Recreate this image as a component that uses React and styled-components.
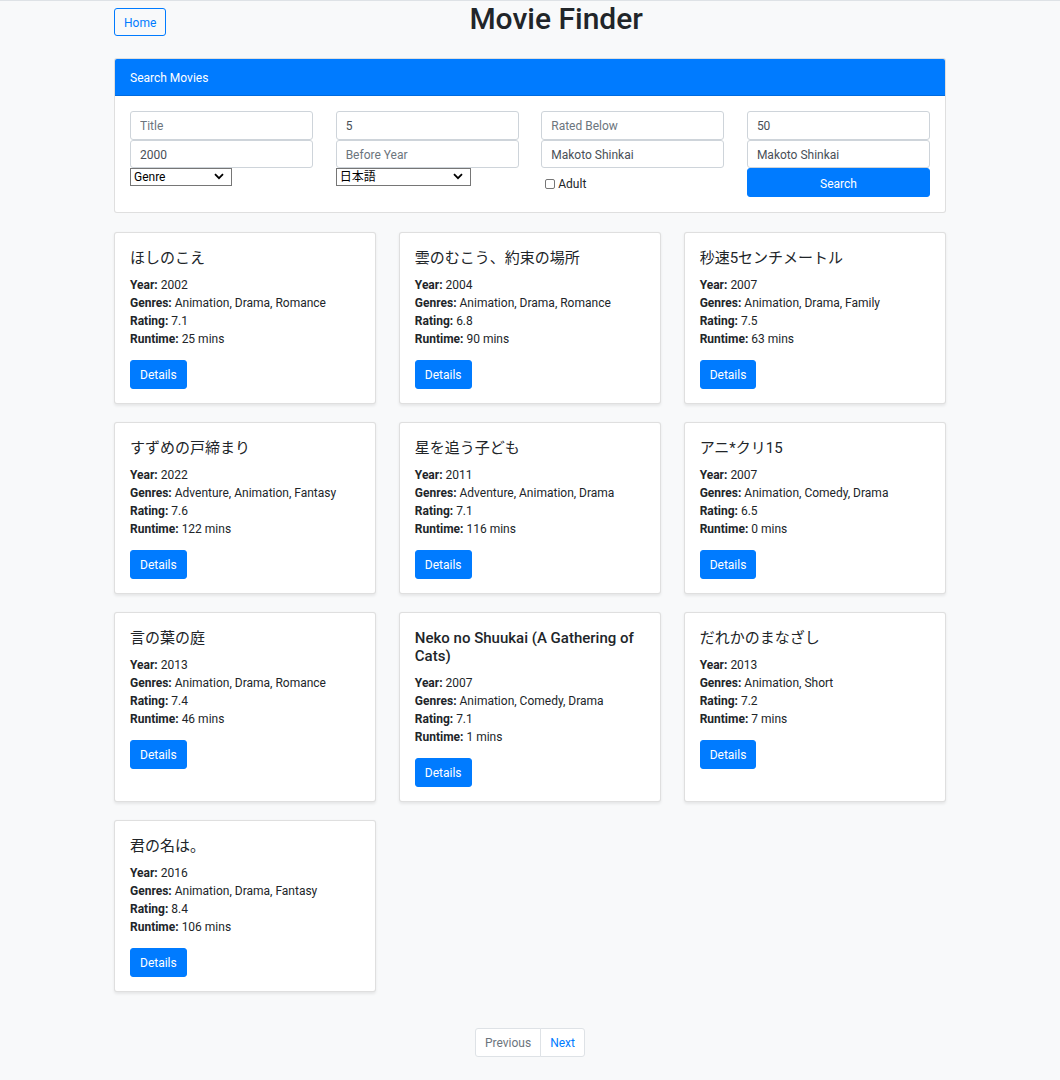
import React from "react";
import styled, { createGlobalStyle } from "styled-components";

const FONT = `Roboto, "Noto Sans CJK JP", sans-serif`;

const GlobalStyle = createGlobalStyle`
  * { box-sizing: border-box; }
  body {
    margin: 0;
    background: #f8f9fa;
    color: #212529;
    font-family: ${FONT};
    font-size: 12px;
    line-height: 1.5;
  }
`;

const Page = styled.div`
  border-top: 1px solid #dee2e6;
  min-height: 1079px;
`;

const Container = styled.div`
  width: 832px;
  margin: 0 auto;
  padding-bottom: 20px;
`;

const Header = styled.header`
  display: flex;
  align-items: center;
  margin-bottom: 15px;
`;

const OutlineButton = styled.button`
  font-family: ${FONT};
  font-size: 12px;
  line-height: 18px;
  padding: 5px 9px 3px;
  color: #007bff;
  background: transparent;
  border: 1px solid #007bff;
  border-radius: 3px;
  cursor: pointer;
`;

const Title = styled.h1`
  flex: 1;
  margin: 0 0 6px;
  text-align: center;
  font-size: 30px;
  line-height: 36px;
  font-weight: 500;
`;

const Card = styled.div`
  display: flex;
  flex-direction: column;
  background: #fff;
  border: 1px solid rgba(0, 0, 0, 0.125);
  border-radius: 3px;
  box-shadow: ${(p) => (p.$shadow ? "0 1.5px 3px rgba(0,0,0,0.075)" : "none")};
`;

const SearchCard = styled(Card)`
  margin-bottom: 18.5px;
`;

const CardHeader = styled.div`
  background: #007bff;
  color: #fff;
  padding: 10px 15px 8px;
  line-height: 18px;
  border-bottom: 1px solid rgba(0, 0, 0, 0.125);
  border-radius: 2px 2px 0 0;
`;

const CardBody = styled.div`
  padding: 15px;
`;

const FormGrid = styled.div`
  display: grid;
  grid-template-columns: repeat(4, 1fr);
  column-gap: 22.5px;
`;

const Column = styled.div`
  display: flex;
  flex-direction: column;
  align-items: flex-start;
`;

const Input = styled.input`
  display: block;
  width: 100%;
  height: 28.5px;
  padding: 5px 9px 3px;
  font-family: ${FONT};
  font-size: 12px;
  line-height: 18px;
  color: #495057;
  background: #fff;
  border: 1px solid #ced4da;
  border-radius: 3px;
  outline: none;
  &::placeholder { color: #6c757d; }
`;

const SelectWrap = styled.div`
  position: relative;
  width: ${(p) => p.$width}px;
`;

const Select = styled.select`
  appearance: none;
  display: block;
  width: 100%;
  height: 18px;
  padding: 0 18px 0 3px;
  font-family: ${FONT};
  font-size: 12px;
  line-height: 16px;
  color: #000;
  background: #fff;
  border: 1px solid #767676;
  border-radius: 0;
`;

const Chevron = styled.svg`
  position: absolute;
  right: 8px;
  top: 5px;
  pointer-events: none;
`;

const CheckRow = styled.label`
  display: flex;
  align-items: center;
  gap: 3px;
  margin: 7px 0 0 4px;
  line-height: 18px;
  color: #212529;
`;

const Checkbox = styled.input`
  appearance: none;
  width: 10px;
  height: 10px;
  margin: 0;
  border: 1px solid #767676;
  border-radius: 2px;
  background: #fff;
`;

const PrimaryButton = styled.button`
  font-family: ${FONT};
  font-size: 12px;
  line-height: 18px;
  padding: 5.5px 9px 3.5px;
  color: #fff;
  background: #007bff;
  border: 1px solid #007bff;
  border-radius: 3px;
  cursor: pointer;
  width: ${(p) => (p.$block ? "100%" : "auto")};
  align-self: flex-start;
`;

const MovieGrid = styled.div`
  display: grid;
  grid-template-columns: repeat(3, 1fr);
  column-gap: 22.5px;
  row-gap: 18px;
`;

const MovieBody = styled.div`
  padding: 16px 15px 14px;
  display: flex;
  flex-direction: column;
`;

const MovieTitle = styled.h5`
  margin: 0 0 9px;
  font-size: 15px;
  line-height: 18px;
  font-weight: ${(p) => (p.$jp ? 400 : 500)};
  color: #212529;
`;

const Info = styled.p`
  margin: 0 0 12px;
  line-height: 18px;
`;

const InfoLine = styled.span`
  display: block;
  strong { font-weight: 700; }
`;

const Pagination = styled.nav`
  display: flex;
  justify-content: center;
  margin-top: 36px;
`;

const PageList = styled.ul`
  display: flex;
  list-style: none;
  margin: 0;
  padding: 0;
`;

const PageLink = styled.a`
  display: block;
  padding: 7px 9px 5px;
  line-height: 15px;
  font-size: 12px;
  color: ${(p) => (p.$disabled ? "#6c757d" : "#007bff")};
  background: #fff;
  border: 1px solid #dee2e6;
  margin-left: ${(p) => (p.$first ? "0" : "-1px")};
  border-radius: ${(p) => (p.$first ? "3px 0 0 3px" : p.$last ? "0 3px 3px 0" : "0")};
  text-decoration: none;
`;

const movies = [
  { title: "ほしのこえ", jp: true, year: 2002, genres: "Animation, Drama, Romance", rating: "7.1", runtime: 25 },
  { title: "雲のむこう、約束の場所", jp: true, year: 2004, genres: "Animation, Drama, Romance", rating: "6.8", runtime: 90 },
  { title: "秒速5センチメートル", jp: true, year: 2007, genres: "Animation, Drama, Family", rating: "7.5", runtime: 63 },
  { title: "すずめの戸締まり", jp: true, year: 2022, genres: "Adventure, Animation, Fantasy", rating: "7.6", runtime: 122 },
  { title: "星を追う子ども", jp: true, year: 2011, genres: "Adventure, Animation, Drama", rating: "7.1", runtime: 116 },
  { title: "アニ*クリ15", jp: true, year: 2007, genres: "Animation, Comedy, Drama", rating: "6.5", runtime: 0 },
  { title: "言の葉の庭", jp: true, year: 2013, genres: "Animation, Drama, Romance", rating: "7.4", runtime: 46 },
  { title: "Neko no Shuukai (A Gathering of Cats)", jp: false, year: 2007, genres: "Animation, Comedy, Drama", rating: "7.1", runtime: 1 },
  { title: "だれかのまなざし", jp: true, year: 2013, genres: "Animation, Short", rating: "7.2", runtime: 7 },
  { title: "君の名は。", jp: true, year: 2016, genres: "Animation, Drama, Fantasy", rating: "8.4", runtime: 106 },
];

const ChevronIcon = () => (
  <Chevron width="10" height="7" viewBox="0 0 10 7">
    <path d="M1 1.2 L5 5.2 L9 1.2" fill="none" stroke="#000" strokeWidth="1.8" />
  </Chevron>
);

function MovieCard({ m }) {
  return (
    <Card $shadow>
      <MovieBody>
        <MovieTitle $jp={m.jp}>{m.title}</MovieTitle>
        <Info>
          <InfoLine><strong>Year:</strong> {m.year}</InfoLine>
          <InfoLine><strong>Genres:</strong> {m.genres}</InfoLine>
          <InfoLine><strong>Rating:</strong> {m.rating}</InfoLine>
          <InfoLine><strong>Runtime:</strong> {m.runtime} mins</InfoLine>
        </Info>
        <PrimaryButton>Details</PrimaryButton>
      </MovieBody>
    </Card>
  );
}

export default function App() {
  return (
    <Page>
      <GlobalStyle />
      <Container>
        <Header>
          <OutlineButton>Home</OutlineButton>
          <Title>Movie Finder</Title>
        </Header>

        <SearchCard>
          <CardHeader>Search Movies</CardHeader>
          <CardBody>
            <FormGrid>
              <Column>
                <Input placeholder="Title" />
                <Input defaultValue="2000" />
                <SelectWrap $width={102}>
                  <Select defaultValue="">
                    <option value="">Genre</option>
                  </Select>
                  <ChevronIcon />
                </SelectWrap>
              </Column>
              <Column>
                <Input defaultValue="5" />
                <Input placeholder="Before Year" />
                <SelectWrap $width={135}>
                  <Select defaultValue="ja">
                    <option value="ja">日本語</option>
                  </Select>
                  <ChevronIcon />
                </SelectWrap>
              </Column>
              <Column>
                <Input placeholder="Rated Below" />
                <Input defaultValue="Makoto Shinkai" />
                <CheckRow>
                  <Checkbox type="checkbox" />
                  Adult
                </CheckRow>
              </Column>
              <Column>
                <Input defaultValue="50" />
                <Input defaultValue="Makoto Shinkai" />
                <PrimaryButton $block>Search</PrimaryButton>
              </Column>
            </FormGrid>
          </CardBody>
        </SearchCard>

        <MovieGrid>
          {movies.map((m) => (
            <MovieCard key={m.title} m={m} />
          ))}
        </MovieGrid>

        <Pagination>
          <PageList>
            <li><PageLink $first $disabled>Previous</PageLink></li>
            <li><PageLink $last href="#">Next</PageLink></li>
          </PageList>
        </Pagination>
      </Container>
    </Page>
  );
}
